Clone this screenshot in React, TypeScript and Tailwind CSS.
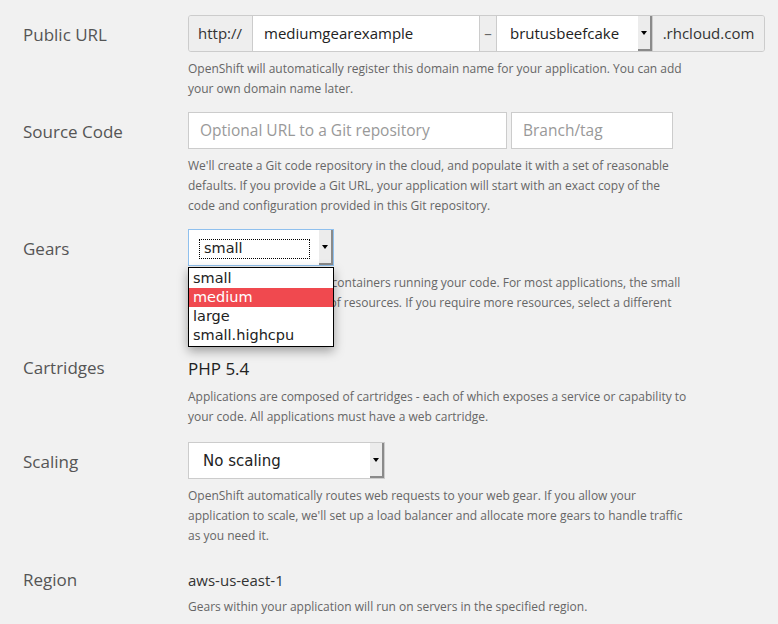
import React from "react";

const sans = "font-['Open_Sans',sans-serif]";
const native = "font-['DejaVu_Sans',sans-serif]";

const Arrow = () => (
    <div className="flex items-center justify-center w-[14px] self-stretch bg-[#ececec] border-r-2 border-b-2 border-r-[#8a8a8a] border-b-[#8a8a8a]">
        <div className="w-0 h-0 border-l-[3px] border-r-[3px] border-t-[4px] border-l-transparent border-r-transparent border-t-black" />
    </div>
);

const Label = ({ children, h = "h-[37px] pt-[3px]" }: { children: React.ReactNode; h?: string }) => (
    <div className={`w-[165px] shrink-0 ${h} flex items-center text-[17px] text-[#555]`}>
        {children}
    </div>
);

const Help = ({ children, mt = "mt-[7px]" }: { children: React.ReactNode; mt?: string }) => (
    <p className={`${mt} w-[500px] text-[12px] leading-5 text-[#666]`}>{children}</p>
);

const gearOptions = ["small", "medium", "large", "small.highcpu"];

export default function App() {
    return (
        <div className={`min-h-[624px] w-full bg-[#f1f1f1] pl-[23px] pt-[15px] ${sans}`}>
            {/* public url */}
            <div className="flex">
                <Label>Public URL</Label>
                <div>
                    <div className="flex h-[37px] w-[577px] border border-[#ccc] rounded-[3px] overflow-hidden text-[15px]">
                        <div className="flex items-center w-[64px] px-[9px] bg-[#eee] border-r border-[#ccc] text-[#333]">
                            http://
                        </div>
                        <div className="flex items-center w-[226px] px-[11px] bg-white text-[#222]">
                            mediumgearexample
                        </div>
                        <div className="flex items-center justify-center w-[18px] bg-[#eee] border-x border-[#ccc] text-[#666]">
                            –
                        </div>
                        <div className="flex w-[155px] bg-white">
                            <div className="flex-1 flex items-center pl-[13px] text-[#222]">
                                brutusbeefcake
                            </div>
                            <Arrow />
                        </div>
                        <div className="flex-1 flex items-center justify-center bg-[#eee] border-l border-[#ccc] text-[#333]">
                            .rhcloud.com
                        </div>
                    </div>
                    <Help>
                        OpenShift will automatically register this domain name for your application. You can add
                        your own domain name later.
                    </Help>
                </div>
            </div>

            {/* source code */}
            <div className="flex mt-[13px]">
                <Label>Source Code</Label>
                <div>
                    <div className="flex gap-[4px]">
                        <div className="flex items-center w-[319px] h-[37px] px-[11px] bg-white border border-[#ccc] text-[15.5px] text-[#999]">
                            Optional URL to a Git repository
                        </div>
                        <div className="flex items-center w-[162px] h-[37px] px-[11px] bg-white border border-[#ccc] text-[15.5px] text-[#999]">
                            Branch/tag
                        </div>
                    </div>
                    <Help>
                        We'll create a Git code repository in the cloud, and populate it with a set of reasonable
                        defaults. If you provide a Git URL, your application will start with an exact copy of the
                        code and configuration provided in this Git repository.
                    </Help>
                </div>
            </div>

            {/* gears */}
            <div className="flex mt-[13px]">
                <Label>Gears</Label>
                <div className="relative">
                    <div className="flex w-[146px] h-[37px] bg-white border border-[#8fc0ee]">
                        <div className="flex-1 flex items-center pl-[10px] pr-[9px] pt-[2px]">
                            <div className={`w-full h-[20px] flex items-center px-[4px] border border-dotted border-black text-[14.5px] text-[#222] ${native}`}>
                                small
                            </div>
                        </div>
                        <Arrow />
                    </div>
                    <div className={`absolute left-0 top-[38px] z-10 w-[146px] py-[1px] bg-white border border-black shadow-[0_4px_10px_rgba(0,0,0,0.35)] text-[14.5px] ${native}`}>
                        {gearOptions.map((o) => (
                            <div
                                key={o}
                                className={`h-[19px] leading-[19px] px-[4px] ${o === "medium" ? "bg-[#f0494f] text-white" : "text-[#222]"}`}
                            >
                                {o}
                            </div>
                        ))}
                    </div>
                    <Help>
                        Gears are the application containers running your code. For most applications, the small
                        gear size provides plenty of resources. If you require more resources, select a different
                        gear size.
                    </Help>
                </div>
            </div>

            {/* cartridges */}
            <div className="flex mt-[20px]">
                <Label h="h-[30px]">Cartridges</Label>
                <div>
                    <div className="h-[30px] flex items-center pt-[1px] text-[17px] text-[#222]">PHP 5.4</div>
                    <Help mt="mt-[4px]">
                        Applications are composed of cartridges - each of which exposes a service or capability to
                        your code. All applications must have a web cartridge.
                    </Help>
                </div>
            </div>

            {/* scaling */}
            <div className="flex mt-[15px]">
                <Label>Scaling</Label>
                <div>
                    <div className="flex w-[197px] h-[37px] bg-white border border-[#ccc]">
                        <div className={`flex-1 flex items-center pl-[14px] pt-[1px] text-[15px] text-[#222] ${native}`}>
                            No scaling
                        </div>
                        <Arrow />
                    </div>
                    <Help>
                        OpenShift automatically routes web requests to your web gear. If you allow your
                        application to scale, we'll set up a load balancer and allocate more gears to handle traffic
                        as you need it.
                    </Help>
                </div>
            </div>

            {/* region */}
            <div className="flex mt-[19px]">
                <Label h="h-[30px]">Region</Label>
                <div>
                    <div className="h-[30px] flex items-center pt-[1px] text-[15px] text-[#333]">aws-us-east-1</div>
                    <Help mt="mt-[2px]">Gears within your application will run on servers in the specified region.</Help>
                </div>
            </div>
        </div>
    );
}
